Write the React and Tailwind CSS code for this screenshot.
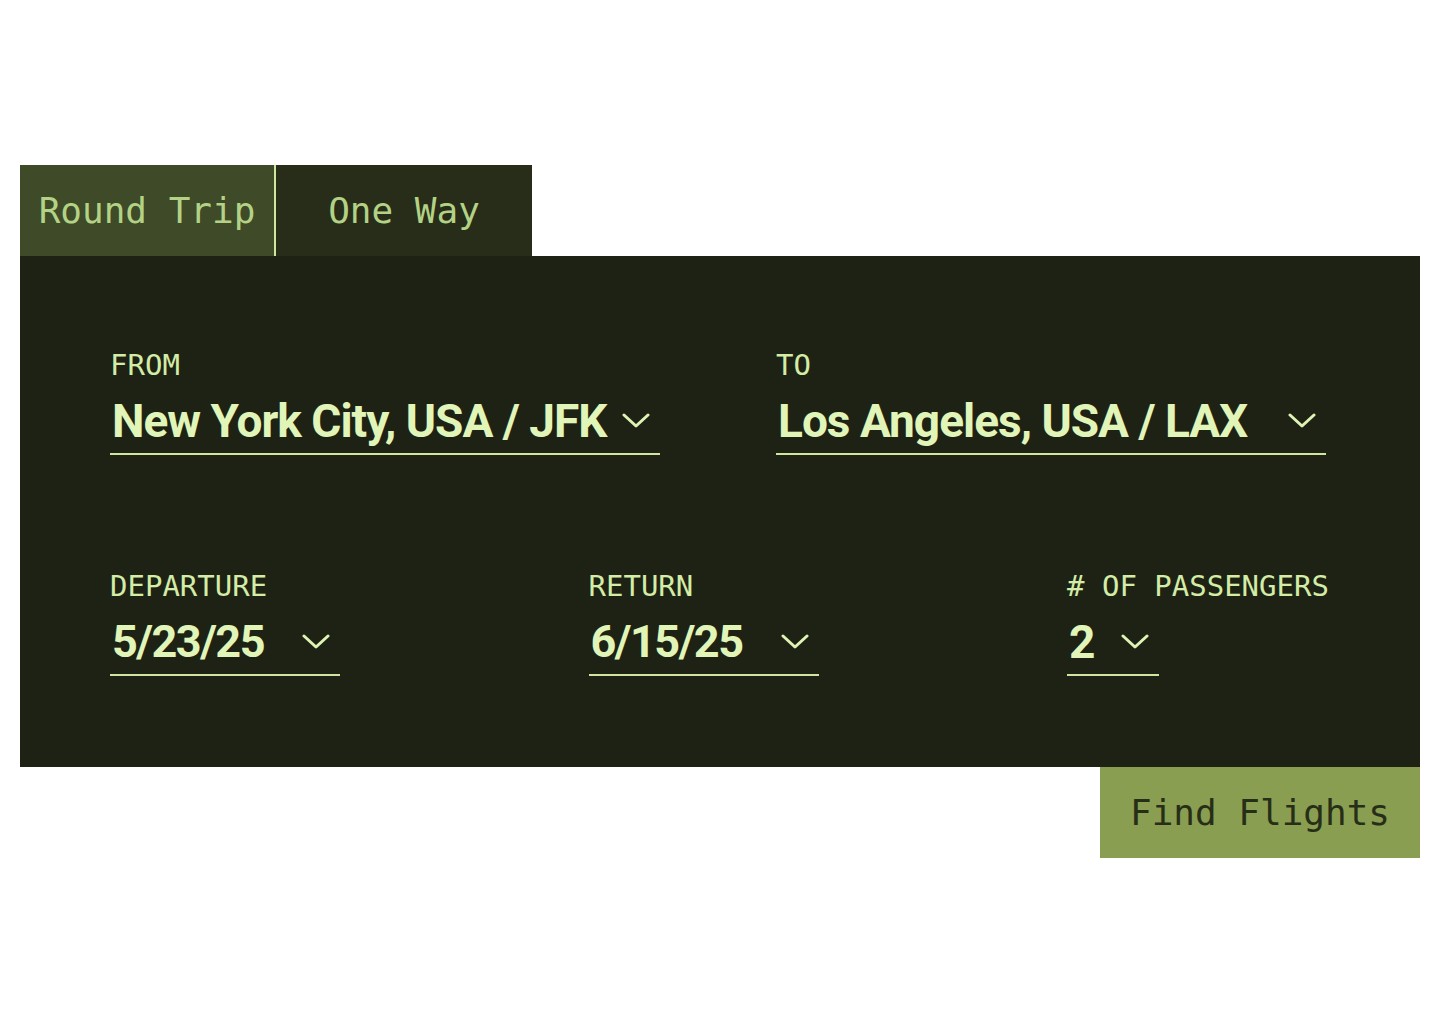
import React from "react";

const mono = { fontFamily: '"DejaVu Sans Mono", "Liberation Mono", monospace' };

function Chevron({ className = "" }) {
  return (
    <svg width="28" height="16" viewBox="0 0 28 16" className={className} fill="none">
      <path d="M2 2 L14 13 L26 2" stroke="#dff3b4" strokeWidth="3" strokeLinecap="round" strokeLinejoin="round" />
    </svg>
  );
}

function Field({ label, value, width, lineWidth, chevronGap, valueClass = "text-[46px] tracking-[-1px]" }) {
  return (
    <div className="flex flex-col" style={{ width }}>
      <div className="text-[29px] leading-[35px] text-[#d3eca6] whitespace-nowrap" style={mono}>
        {label}
      </div>
      <div className="mt-[10px] flex items-center border-b-2 border-[#cfe6a0] pb-[4px]" style={{ width: lineWidth }}>
        <span className={"font-['Roboto',sans-serif] font-bold leading-[56px] text-[#e1f5b9] whitespace-nowrap pl-[2px] " + valueClass}>
          {value}
        </span>
        <Chevron className={chevronGap} />
      </div>
    </div>
  );
}

export default function App() {
  return (
    <div className="w-[1440px] h-[1024px] bg-white pt-[165px] px-[20px]">
      <div className="flex">
        <button className="w-[256px] h-[91px] bg-[#3e4a28] border-r-2 border-[#cfe6a0] text-[36px] text-[#b3d285] flex items-center justify-center" style={mono}>
          Round Trip
        </button>
        <button className="w-[256px] h-[91px] bg-[#282d19] text-[36px] text-[#b3d285] flex items-center justify-center" style={mono}>
          One Way
        </button>
      </div>
      <div className="bg-[#1e2215] h-[511px] px-[90px] pt-[92px]">
        <div className="flex gap-[116px]">
          <Field label="FROM" value="New York City, USA / JFK" width={550} lineWidth={550} chevronGap="ml-auto mr-[10px]" />
          <Field label="TO" value="Los Angeles, USA / LAX" width={550} lineWidth={550} chevronGap="ml-auto mr-[10px]" />
        </div>
        <div className="flex justify-between mt-[114px]">
          <Field label="DEPARTURE" value="5/23/25" width={230} lineWidth={230} chevronGap="ml-auto mr-[10px]" valueClass="text-[45px] tracking-[-1.5px]" />
          <Field label="RETURN" value="6/15/25" width={230} lineWidth={230} chevronGap="ml-auto mr-[10px]" valueClass="text-[45px] tracking-[-1.5px]" />
          <Field label="# OF PASSENGERS" value="2" width={263} lineWidth={92} chevronGap="ml-auto mr-[10px]" />
        </div>
      </div>
      <div className="flex justify-end">
        <button className="w-[320px] h-[91px] bg-[#8a9e52] text-[36px] text-[#272e17] flex items-center justify-center" style={mono}>
          Find Flights
        </button>
      </div>
    </div>
  );
}
